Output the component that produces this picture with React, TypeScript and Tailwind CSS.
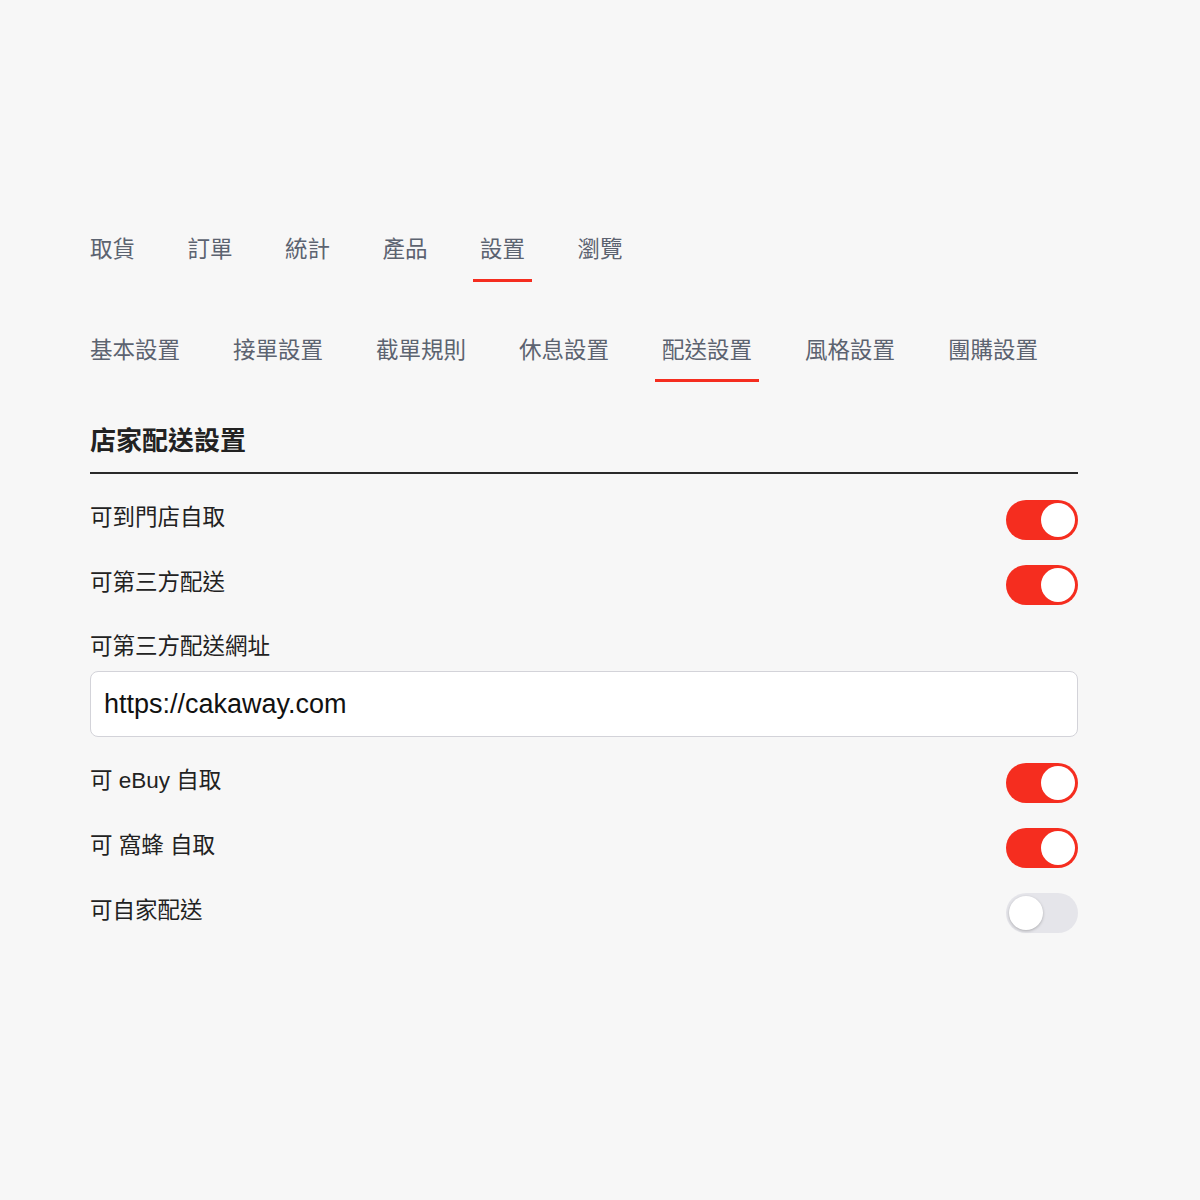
import React, { useState } from 'react';

const mainTabs = ['取貨', '訂單', '統計', '產品', '設置', '瀏覽'];
const subTabs = ['基本設置', '接單設置', '截單規則', '休息設置', '配送設置', '風格設置', '團購設置'];

const Toggle: React.FC<{ on: boolean; onChange: () => void }> = ({ on, onChange }) => (
    <button
        onClick={onChange}
        className={`flex h-[40px] w-[72px] items-center rounded-full p-[3px] ${on ? 'justify-end bg-[#f52d1f]' : 'justify-start bg-[#e5e5ea]'}`}
    >
        <span
            className={`block h-[34px] w-[34px] rounded-full bg-white ${on ? '' : 'shadow-[0_1px_3px_rgba(0,0,0,0.25)]'}`}
        ></span>
    </button>
);

export default function App() {
    const [mainTab, setMainTab] = useState('設置');
    const [subTab, setSubTab] = useState('配送設置');
    const [opts, setOpts] = useState({
        store: true,
        third: true,
        ebuy: true,
        wofeng: true,
        home: false,
    });
    const [url, setUrl] = useState('https://cakaway.com');

    const flip = (k: keyof typeof opts) => setOpts({ ...opts, [k]: !opts[k] });

    return (
        <div className="min-h-[1200px] w-full bg-[#f7f7f7] pl-[90px] pt-[235px] font-['Liberation_Sans','Noto_Sans_CJK_TC',sans-serif] text-[#222]">
            <div className="w-[988px]">
                {/* Main tabs */}
                <div className="-ml-[7px] flex gap-[38.5px]">
                    {mainTabs.map((t) => (
                        <button
                            key={t}
                            onClick={() => setMainTab(t)}
                            className={`border-b-[3px] px-[7px] pb-[14px] text-[22.5px] leading-[30px] text-[#5c6370] ${mainTab === t ? 'border-[#f52d1f]' : 'border-transparent'}`}
                        >
                            {t}
                        </button>
                    ))}
                </div>

                {/* Sub tabs */}
                <div className="-ml-[7px] mt-[53px] flex gap-[39px]">
                    {subTabs.map((t) => (
                        <button
                            key={t}
                            onClick={() => setSubTab(t)}
                            className={`border-b-[3px] px-[7px] pb-[13px] pt-px text-[22.5px] leading-[30px] text-[#5c6370] ${subTab === t ? 'border-[#f52d1f]' : 'border-transparent'}`}
                        >
                            {t}
                        </button>
                    ))}
                </div>

                {/* Section */}
                <h2 className="mt-[43px] border-b-2 border-[#2a2a2a] pb-[15px] text-[26px] font-semibold leading-[32px]">
                    店家配送設置
                </h2>

                <div className="flex flex-col gap-[25px] pt-[26px]">
                    <div className="flex h-[40px] items-center justify-between">
                        <span className="pb-[4px] text-[22.5px]">可到門店自取</span>
                        <Toggle on={opts.store} onChange={() => flip('store')} />
                    </div>
                    <div className="flex h-[40px] items-center justify-between">
                        <span className="pb-[4px] text-[22.5px]">可第三方配送</span>
                        <Toggle on={opts.third} onChange={() => flip('third')} />
                    </div>
                    <div>
                        <div className="text-[22.5px] leading-[34px]">可第三方配送網址</div>
                        <input
                            value={url}
                            onChange={(e) => setUrl(e.target.value)}
                            className="mt-[7px] h-[66px] w-full rounded-[8px] border border-[#d3d3d9] bg-white pl-[13px] text-[27px] text-[#111] outline-none"
                        />
                    </div>
                    <div className="mt-px flex h-[40px] items-center justify-between">
                        <span className="pb-[4px] text-[22.5px]">可 eBuy 自取</span>
                        <Toggle on={opts.ebuy} onChange={() => flip('ebuy')} />
                    </div>
                    <div className="flex h-[40px] items-center justify-between">
                        <span className="pb-[4px] text-[22.5px]">可 窩蜂 自取</span>
                        <Toggle on={opts.wofeng} onChange={() => flip('wofeng')} />
                    </div>
                    <div className="flex h-[40px] items-center justify-between">
                        <span className="pb-[4px] text-[22.5px]">可自家配送</span>
                        <Toggle on={opts.home} onChange={() => flip('home')} />
                    </div>
                </div>
            </div>
        </div>
    );
}
